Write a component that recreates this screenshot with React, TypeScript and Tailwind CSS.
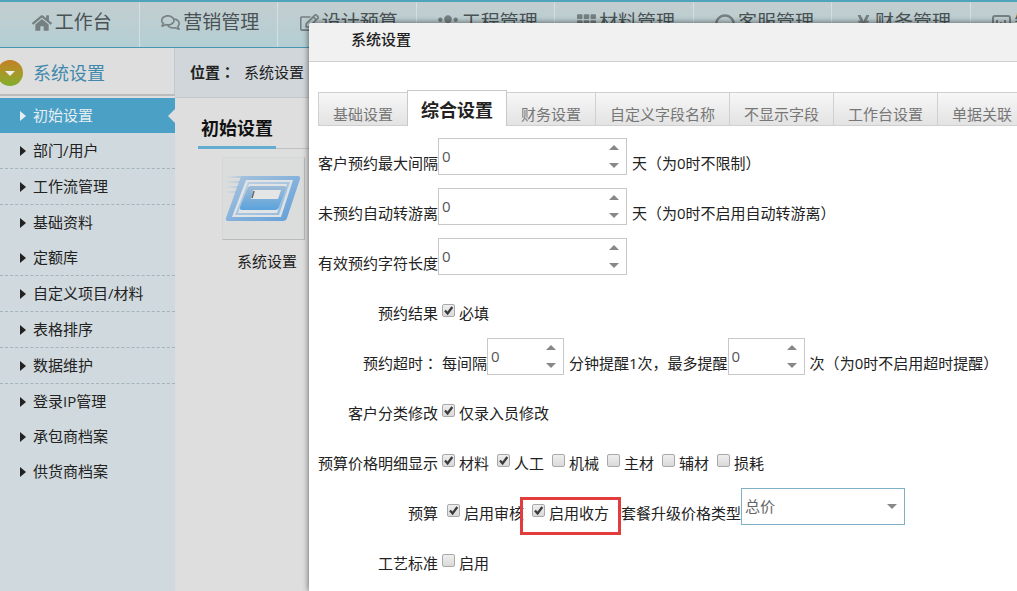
import { useState } from 'react'
import type { ReactNode } from 'react'
import { FaHome, FaRegComments, FaRegEdit, FaUsers, FaTh, FaHeadphones, FaYenSign } from 'react-icons/fa'

const navItems = [
  { label: '工作台', icon: <FaHome size={20} /> },
  { label: '营销管理', icon: <FaRegComments size={19} /> },
  { label: '设计预算', icon: <FaRegEdit size={19} /> },
  { label: '工程管理', icon: <FaUsers size={22} /> },
  { label: '材料管理', icon: <FaTh size={19} /> },
  { label: '客服管理', icon: <FaHeadphones size={20} /> },
  { label: '财务管理', icon: <FaYenSign size={17} /> },
  { label: '知识管理', icon: <BoardIcon /> },
]

const menuItems = [
  { label: '初始设置', divider: false },
  { label: '部门/用户', divider: true },
  { label: '工作流管理', divider: true },
  { label: '基础资料', divider: false },
  { label: '定额库', divider: true },
  { label: '自定义项目/材料', divider: true },
  { label: '表格排序', divider: true },
  { label: '数据维护', divider: true },
  { label: '登录IP管理', divider: false },
  { label: '承包商档案', divider: false },
  { label: '供货商档案', divider: false },
]

const tabs = ['基础设置', '综合设置', '财务设置', '自定义字段名称', '不显示字段', '工作台设置', '单据关联']

function BoardIcon() {
  return (
    <svg width="19" height="18" viewBox="0 0 19 18" fill="none" stroke="currentColor" strokeWidth="2">
      <rect x="1" y="2" width="17" height="14" rx="2" />
      <path d="M5 13V6M9 13V8M13 13V6" />
    </svg>
  )
}

function ModuleIcon() {
  return (
    <svg width="78" height="50" viewBox="0 0 78 50">
      <defs>
        <linearGradient id="frame" x1="0" y1="0" x2="1" y2="1">
          <stop offset="0" stopColor="#a9c4dc" />
          <stop offset="0.5" stopColor="#86b2dc" />
          <stop offset="1" stopColor="#5f9fd8" />
        </linearGradient>
        <linearGradient id="panel" x1="0" y1="0" x2="0" y2="1">
          <stop offset="0" stopColor="#9fbcd6" />
          <stop offset="1" stopColor="#5aa3dc" />
        </linearGradient>
        <linearGradient id="streak" gradientUnits="userSpaceOnUse" x1="0" y1="0" x2="22" y2="0">
          <stop offset="0" stopColor="#b9cbdd" stopOpacity="0" />
          <stop offset="1" stopColor="#a3bfda" />
        </linearGradient>
      </defs>
      <path d="M3 3h20M2 8h18M1 13h16M0 18h14" stroke="url(#streak)" strokeWidth="2" />
      <path d="M20 2h54q3 0 2 3L63 44q-1 3-4 3H4q-3 0-2-3L16 5q1-3 4-3z" fill="url(#frame)" />
      <path d="M22 6h47L57 43H8z" fill="#dfe3e6" />
      <path d="M24 8h42L55 41H11z" fill="url(#frame)" opacity="0.6" />
      <path d="M25 10h38L53 39H14z" fill="#e0e4e7" />
      <path d="M27 12h33q3 0 2 3l-7 18q-1 3-4 3H18q-3 0-2-3l7-18q1-3 4-3z" fill="url(#panel)" />
      <path d="M29 16h28l-3 9H27z" fill="#e4e5e5" />
      <path d="M30 17l-2 7" stroke="#62686d" strokeWidth="1.5" />
    </svg>
  )
}

function Triangle({ className }: { className?: string }) {
  return (
    <svg width="10" height="5" viewBox="0 0 10 5" className={className} aria-hidden="true">
      <path d="M0 0h10L5 5z" fill="currentColor" />
    </svg>
  )
}

function NumberBox({ label, wide }: { label: string; wide?: boolean }) {
  const [value, setValue] = useState(0)

  return (
    <div className={`flex h-[37px] shrink-0 border border-[#c8c8c8] bg-white ${wide ? 'w-[189px]' : 'w-[77px]'}`}>
      <input
        type="text"
        inputMode="numeric"
        aria-label={label}
        value={value}
        onChange={(e) => setValue(Number(e.target.value) || 0)}
        className="min-w-0 flex-1 pb-0.5 pl-[3px] text-[#555] outline-none"
      />
      <div className="flex w-6 flex-col text-[#888]">
        <button type="button" aria-label="增加" onClick={() => setValue(value + 1)} className="flex flex-1 items-center justify-center">
          <Triangle className="rotate-180" />
        </button>
        <button type="button" aria-label="减少" onClick={() => setValue(Math.max(0, value - 1))} className="flex flex-1 items-center justify-center">
          <Triangle />
        </button>
      </div>
    </div>
  )
}

function Check({ label, checked, marked }: { label: string; checked?: boolean; marked?: boolean }) {
  return (
    <label className="relative mx-1 flex shrink-0 items-end gap-1">
      <span className="relative mb-2 block size-[13px]">
        <input
          type="checkbox"
          defaultChecked={checked}
          className="peer block size-[13px] appearance-none rounded-[2px] border border-[#a9a9a9] bg-linear-to-b from-[#eee] to-[#dadada]"
        />
        <svg viewBox="0 0 13 13" className="pointer-events-none absolute inset-0 hidden peer-checked:block">
          <path d="M3 6.5l2.6 3L10.3 3" fill="none" stroke="#3a3a3a" strokeWidth="2.3" />
        </svg>
      </span>
      {label}
      {marked && <span className="pointer-events-none absolute -inset-x-3 -top-1 -bottom-2.5 border-3 border-[#e23c3c]" />}
    </label>
  )
}

// full-width punctuation centred in its cell
function Mark({ children }: { children: ReactNode }) {
  return <span className="font-['Noto_Sans_CJK_TC',sans-serif]">{children}</span>
}

function Hint({ unit, children }: { unit: string; children: ReactNode }) {
  return (
    <span className="ml-[5px]">
      {unit}
      <Mark>（</Mark>
      {children}
      <Mark>）</Mark>
    </span>
  )
}

function Row({ title, children }: { title: ReactNode; children: ReactNode }) {
  return (
    <div className="flex h-[37px] items-end leading-6 whitespace-nowrap">
      <div className="w-[120px] shrink-0 text-right">{title}</div>
      {children}
    </div>
  )
}

export default function App() {
  const [activeTab, setActiveTab] = useState('综合设置')

  return (
    <div className="relative flex h-screen flex-col overflow-hidden bg-[#dedede] font-['Open_Sans','Noto_Sans_CJK_SC',sans-serif] text-[15px] text-[#222]">
      <header className="shrink-0 overflow-hidden border-t-2 border-b border-t-[#4fa3ba] border-b-[#4a96b0] bg-linear-to-b from-[#c3cdcf] to-[#b3cfd4]">
        <nav className="flex h-[45px] pl-px">
          {navItems.map((item) => (
            <a
              key={item.label}
              href="#"
              className="flex w-3/22 shrink-0 items-center justify-center gap-[3px] border-r border-[#d3dfe1] pb-1 pl-1 text-[19px] whitespace-nowrap text-[#4a5254]"
            >
              <span className="text-[#767f81]">{item.icon}</span>
              {item.label}
            </a>
          ))}
        </nav>
      </header>

      <div className="flex min-h-0 flex-1">
        <aside className="w-[175px] shrink-0 bg-[#d0d9dd]">
          <div className="border-b-2 border-[#dedede] bg-[#dedede]">
            <h2 className="flex h-12 items-center gap-2.5 border-r border-b-2 border-r-[#c3c8ca] border-b-[#b9bbbc] pt-1 text-[18px] text-[#4189ac]">
              <span className="-ml-[3px] flex size-[26px] items-center justify-center rounded-full bg-linear-to-b from-[#c47f24] to-[#7fae2c] text-[#eee]">
                <Triangle />
              </span>
              系统设置
            </h2>
          </div>
          <ul>
            {menuItems.map((item, i) => (
              <li
                key={item.label}
                className={`${item.divider ? 'border-b border-dashed border-[#a3b5ba]' : ''} ${i === 0 ? 'bg-[#4ba0c6] text-[#e6eef2]' : ''}`}
              >
                <a href="#" className="flex h-[35px] items-center pl-5">
                  <svg width="6" height="10" viewBox="0 0 6 10" className="mr-[7px]" fill="currentColor">
                    <path d="M0 0l6 5-6 5z" />
                  </svg>
                  {item.label}
                  {i === 0 && (
                    <svg width="7" height="14" viewBox="0 0 7 14" className="ml-auto" fill="#dedede">
                      <path d="M7 0v14L0 7z" />
                    </svg>
                  )}
                </a>
              </li>
            ))}
          </ul>
        </aside>

        <main className="min-w-0 flex-1">
          <div className="flex h-[50px] items-center gap-[9px] border-b border-[#c3c7ca] bg-[#d0d6da] pl-[15px]">
            <b>
              位置<Mark>：</Mark>
            </b>
            <span>系统设置</span>
          </div>
          <div className="pl-[23px]">
            <div className="flex border-b border-[#bfc1c2] pt-3">
              <h3 className="-mb-px flex h-[39px] items-center border-b-3 border-[#64acd0] px-[3px] text-[18px] font-bold text-[#111]">初始设置</h3>
            </div>
            <a href="#" className="mt-2 ml-6 flex w-[90px] flex-col items-center gap-2.5">
              <span className="mr-2 flex size-[83px] items-center justify-center border border-t-[#d6d7d7] border-r-[#b9bbbb] border-b-[#b9bbbb] border-l-[#d6d7d7] bg-[#dbdddd]">
                <ModuleIcon />
              </span>
              系统设置
            </a>
          </div>
        </main>
      </div>

      <section
        role="dialog"
        aria-label="系统设置"
        className="absolute top-[23px] right-0 bottom-0 left-[309px] overflow-hidden rounded-tl-[3px] bg-white text-[#222] shadow-[0_0_6px_rgba(0,0,0,0.6)]"
      >
        <h1 className="flex h-[39px] items-center border-b border-[#d0d0d0] bg-[#f1f1f1] pb-1.5 pl-[42px] font-medium text-[#222]">系统设置</h1>

        <div role="tablist" className="mt-7 flex items-end pl-[9px] whitespace-nowrap">
          {tabs.map((tab) => (
            <button
              key={tab}
              type="button"
              role="tab"
              aria-selected={tab === activeTab}
              onClick={() => setActiveTab(tab)}
              className={
                tab === activeTab
                  ? '-ml-px h-9 shrink-0 border-x border-t border-[#c8c8c8] bg-white px-[13px] pt-1 text-[18px] font-bold text-[#222]'
                  : 'h-[34px] shrink-0 border-y border-r border-[#d0d0d0] bg-linear-to-b from-[#f7f7f7] to-[#e3e3e3] px-3.5 pt-2.5 text-[#777] first:border-l'
              }
            >
              {tab}
            </button>
          ))}
        </div>

        <form className="mt-3 flex flex-col gap-[13px] pl-[9px]">
          <Row title="客户预约最大间隔">
            <NumberBox label="客户预约最大间隔" wide />
            <Hint unit="天">为0时不限制</Hint>
          </Row>
          <Row title="未预约自动转游离">
            <NumberBox label="未预约自动转游离" wide />
            <Hint unit="天">为0时不启用自动转游离</Hint>
          </Row>
          <Row title="有效预约字符长度">
            <NumberBox label="有效预约字符长度" wide />
          </Row>
          <Row title="预约结果">
            <Check label="必填" checked />
          </Row>
          <Row title={<>预约超时<Mark>：</Mark></>}>
            <span className="ml-1">每间隔</span>
            <NumberBox label="提醒间隔分钟" />
            <span className="ml-[5px]">分钟提醒1次，最多提醒</span>
            <NumberBox label="最多提醒次数" />
            <Hint unit="次">为0时不启用超时提醒</Hint>
          </Row>
          <Row title="客户分类修改">
            <Check label="仅录入员修改" checked />
          </Row>
          <Row title="预算价格明细显示">
            <Check label="材料" checked />
            <Check label="人工" checked />
            <Check label="机械" />
            <Check label="主材" />
            <Check label="辅材" />
            <Check label="损耗" />
          </Row>
          <Row title="预算">
            <div className="flex pl-[5px]">
              <Check label="启用审核" checked />
              <Check label="启用收方" checked marked />
            </div>
            <label htmlFor="priceType" className="ml-2">套餐升级价格类型</label>
            <div className="relative shrink-0">
              <select
                id="priceType"
                className="block h-[37px] w-[164px] appearance-none border border-[#7fb0c6] bg-white pb-0.5 pl-[3px] text-[#666] outline-none"
              >
                <option>总价</option>
                <option>单价</option>
              </select>
              <Triangle className="pointer-events-none absolute top-4 right-2 text-[#888]" />
            </div>
          </Row>
          <Row title="工艺标准">
            <Check label="启用" />
          </Row>
        </form>
      </section>
    </div>
  )
}
